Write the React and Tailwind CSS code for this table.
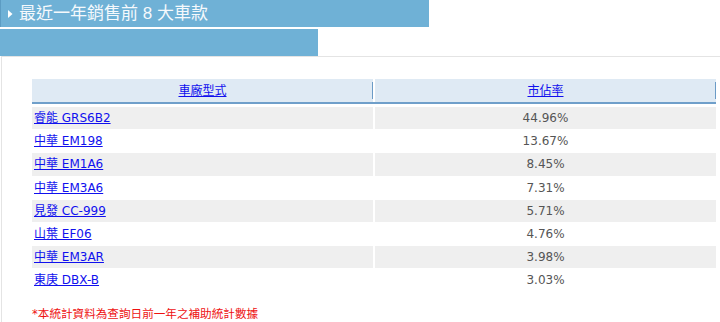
import React from 'react';

const rows = [
  { name: '睿能 GRS6B2', share: '44.96%' },
  { name: '中華 EM198', share: '13.67%' },
  { name: '中華 EM1A6', share: '8.45%' },
  { name: '中華 EM3A6', share: '7.31%' },
  { name: '見發 CC-999', share: '5.71%' },
  { name: '山葉 EF06', share: '4.76%' },
  { name: '中華 EM3AR', share: '3.98%' },
  { name: '東庚 DBX-B', share: '3.03%' },
];

const font = { fontFamily: '"DejaVu Sans", "Noto Sans CJK TC", sans-serif' };

const App = () => {
  return (
    <div className="w-[720px] h-[322px] bg-white overflow-hidden" style={font}>
      {/* Title bar */}
      <div className="w-[429px] h-[27px] bg-[#6fb1d6] border-l border-[#5c9cc3] flex items-center">
        <svg width="5" height="8" viewBox="0 0 5 8" className="ml-[7px] mt-[1px]">
          <path d="M0 0 L4.5 4 L0 8 Z" fill="#ffffff" />
        </svg>
        <span
          className="ml-[6px] text-[17px] leading-none text-[#f5f9fc]"
          style={{ fontFamily: '"Liberation Sans", "Noto Sans CJK TC", sans-serif' }}
        >
          最近一年銷售前 8 大車款
        </span>
      </div>
      <div className="w-[318px] h-[27px] mt-[2px] bg-[#6fb1d6]"></div>

      {/* Content box */}
      <div className="ml-px h-full border-t border-l border-[#e4e4e4] pt-[22px] pl-[30px]">
        <div className="w-[684px]">
          <div className="grid grid-cols-[341px_341px] gap-x-[2px]">
            <div className="relative h-[23px] bg-[#dfeaf4] flex items-center justify-center">
              <a href="#" className="text-[12px] text-[#1010ee] underline">車廠型式</a>
              <span className="absolute right-0 top-[3px] bottom-[3px] w-px bg-[#6b9bc6]"></span>
            </div>
            <div className="relative h-[23px] bg-[#dfeaf4] flex items-center justify-center">
              <a href="#" className="text-[12px] text-[#1010ee] underline">市佔率</a>
              <span className="absolute right-0 top-[3px] bottom-[3px] w-px bg-[#6b9bc6]"></span>
            </div>
          </div>
          <div className="h-[2px] bg-[#6f9fca]"></div>

          <div className="flex flex-col gap-y-px mt-[3px]">
            {rows.map((r, i) => (
              <div key={r.name} className="grid grid-cols-[341px_341px] gap-x-[2px] h-[22.2px]">
                <div className={`flex items-center pl-[2px] ${i % 2 === 0 ? 'bg-[#efefef]' : 'bg-white'}`}>
                  <a href="#" className="text-[12px] text-[#1010ee] underline">{r.name}</a>
                </div>
                <div className={`flex items-center justify-center text-[12px] text-[#555555] ${i % 2 === 0 ? 'bg-[#efefef]' : 'bg-white'}`}>
                  {r.share}
                </div>
              </div>
            ))}
          </div>

          <p className="mt-[15px] text-[11.6px] leading-[14px] text-[#ee1111]">*本統計資料為查詢日前一年之補助統計數據</p>
        </div>
      </div>
    </div>
  );
};

export default App;
